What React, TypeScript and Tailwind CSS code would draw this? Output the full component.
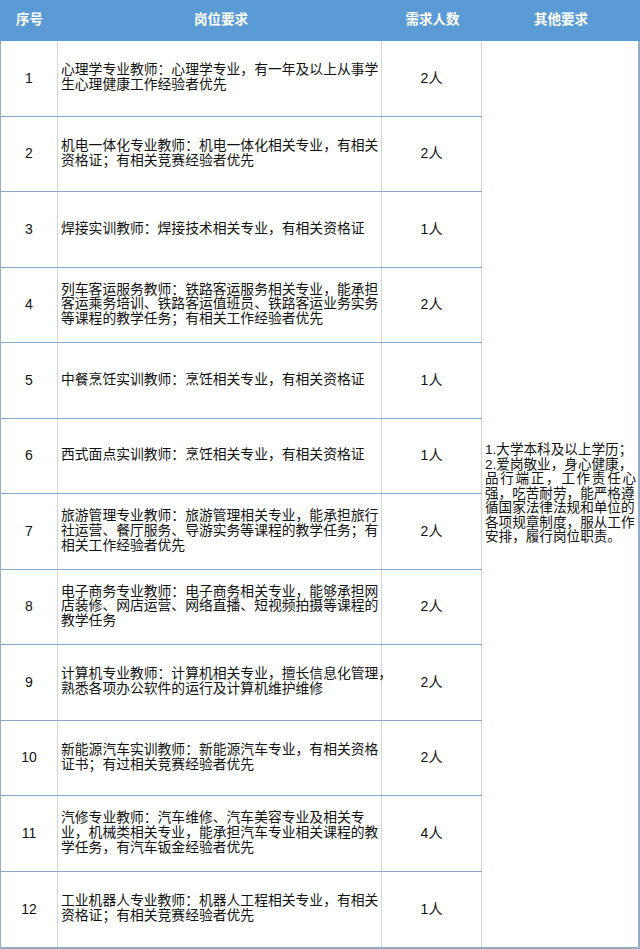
import React from 'react';

const rows: { no: string; lines: string[]; count: string }[] = [
  { no: '1', lines: ['心理学专业教师：心理学专业，有一年及以上从事学', '生心理健康工作经验者优先'], count: '2人' },
  { no: '2', lines: ['机电一体化专业教师：机电一体化相关专业，有相关', '资格证；有相关竞赛经验者优先'], count: '2人' },
  { no: '3', lines: ['焊接实训教师：焊接技术相关专业，有相关资格证'], count: '1人' },
  {
    no: '4',
    lines: ['列车客运服务教师：铁路客运服务相关专业，能承担', '客运乘务培训、铁路客运值班员、铁路客运业务实务', '等课程的教学任务；有相关工作经验者优先'],
    count: '2人',
  },
  { no: '5', lines: ['中餐烹饪实训教师：烹饪相关专业，有相关资格证'], count: '1人' },
  { no: '6', lines: ['西式面点实训教师：烹饪相关专业，有相关资格证'], count: '1人' },
  {
    no: '7',
    lines: ['旅游管理专业教师：旅游管理相关专业，能承担旅行', '社运营、餐厅服务、导游实务等课程的教学任务；有', '相关工作经验者优先'],
    count: '2人',
  },
  {
    no: '8',
    lines: ['电子商务专业教师：电子商务相关专业，能够承担网', '店装修、网店运营、网络直播、短视频拍摄等课程的', '教学任务'],
    count: '2人',
  },
  { no: '9', lines: ['计算机专业教师：计算机相关专业，擅长信息化管理，', '熟悉各项办公软件的运行及计算机维护维修'], count: '2人' },
  { no: '10', lines: ['新能源汽车实训教师：新能源汽车专业，有相关资格', '证书；有过相关竞赛经验者优先'], count: '2人' },
  {
    no: '11',
    lines: ['汽修专业教师：汽车维修、汽车美容专业及相关专', '业，机械类相关专业，能承担汽车专业相关课程的教', '学任务，有汽车钣金经验者优先'],
    count: '4人',
  },
  { no: '12', lines: ['工业机器人专业教师：机器人工程相关专业，有相关', '资格证；有相关竞赛经验者优先'], count: '1人' },
];

const other = [
  '1.大学本科及以上学历；',
  '2.爱岗敬业，身心健康，',
  '品行端正，工作责任心',
  '强，吃苦耐劳，能严格遵',
  '循国家法律法规和单位的',
  '各项规章制度，服从工作',
  '安排，履行岗位职责。',
];

export default function App() {
  return (
    <div className="w-[640px] bg-white text-[#111] font-['Liberation_Sans','Noto_Sans_CJK_SC',sans-serif]">
      {/* header */}
      <div className="flex h-[41px] bg-[#5b9bd5] text-[13.5px] font-bold text-white">
        <div className="flex w-[59px] items-center justify-center">序号</div>
        <div className="flex w-[324px] items-center justify-center">岗位要求</div>
        <div className="flex w-[99px] items-center justify-center">需求人数</div>
        <div className="flex flex-1 items-center justify-center">其他要求</div>
      </div>

      <div className="flex border-b-2 border-l border-r-2 border-[#94adc6]">
        <div className="flex w-[481px] flex-col">
          {rows.map((r, i) => (
            <div
              key={r.no}
              className={`flex h-[75.5px] ${i < rows.length - 1 ? 'border-b border-[#8ca8c4]' : ''}`}
            >
              <div className="flex w-[57px] items-center justify-center border-r-[1.5px] border-[#d0d4d8] text-[14px]">
                {r.no}
              </div>
              <div className="flex w-[324px] flex-col justify-center border-r-[1.5px] border-[#d0d4d8] pl-[3px] text-[13.8px] leading-[14.8px] whitespace-nowrap">
                {r.lines.map((l) => (
                  <span key={l}>{l}</span>
                ))}
              </div>
              <div className="flex flex-1 items-center justify-center border-r-[1.5px] border-[#d0d4d8] text-[14px]">
                {r.count}
              </div>
            </div>
          ))}
        </div>
        <div className="flex flex-1 flex-col justify-center pl-[3px] pr-[2px] text-[13.6px] leading-[14.5px] whitespace-nowrap">
          {other.map((l, i) => (
            <span key={l} className={i === 2 ? 'block text-justify [text-align-last:justify]' : 'block'}>
              {l}
            </span>
          ))}
        </div>
      </div>
    </div>
  );
}
